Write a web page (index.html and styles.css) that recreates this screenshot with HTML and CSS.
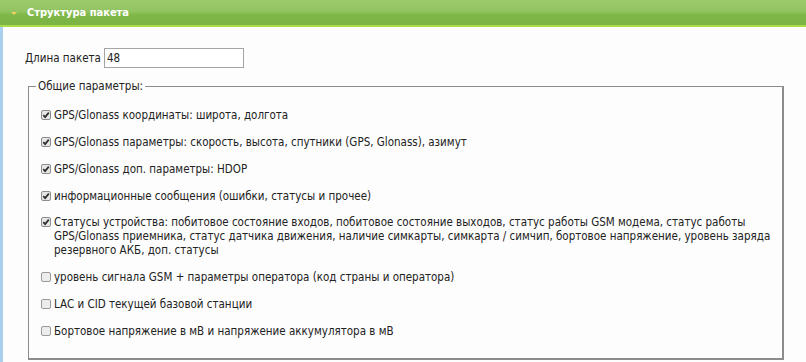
FILE: index.html
```html
<!DOCTYPE html>
<html lang="ru">
<head>
<meta charset="utf-8">
<title>Структура пакета</title>
<link rel="stylesheet" href="styles.css">
</head>
<body>
<div class="panel">
  <div class="panel-header">
    <span class="caret"></span>
    <span class="panel-title">Структура пакета</span>
  </div>
  <div class="panel-body">
    <div class="length-row">
      <label class="length-label" for="len">Длина пакета</label>
      <input class="length-input" id="len" type="text" value="48">
    </div>
    <fieldset class="group">
      <legend class="group-legend">Общие параметры:</legend>
      <p class="opt"><span class="cb"><svg viewBox="0 0 10 10" width="10" height="10"><rect x="0.5" y="0.5" width="9" height="9" rx="1.5" fill="#e6e6e6" stroke="#8e8e8e"/><path d="M2.3 5.2 L4.1 7.1 L7.8 2.6" fill="none" stroke="#2e2e2e" stroke-width="1.7"/></svg></span>GPS/Glonass координаты: широта, долгота</p>
      <p class="opt"><span class="cb"><svg viewBox="0 0 10 10" width="10" height="10"><rect x="0.5" y="0.5" width="9" height="9" rx="1.5" fill="#e6e6e6" stroke="#8e8e8e"/><path d="M2.3 5.2 L4.1 7.1 L7.8 2.6" fill="none" stroke="#2e2e2e" stroke-width="1.7"/></svg></span>GPS/Glonass параметры: скорость, высота, спутники (GPS, Glonass), азимут</p>
      <p class="opt"><span class="cb"><svg viewBox="0 0 10 10" width="10" height="10"><rect x="0.5" y="0.5" width="9" height="9" rx="1.5" fill="#e6e6e6" stroke="#8e8e8e"/><path d="M2.3 5.2 L4.1 7.1 L7.8 2.6" fill="none" stroke="#2e2e2e" stroke-width="1.7"/></svg></span>GPS/Glonass доп. параметры: HDOP</p>
      <p class="opt"><span class="cb"><svg viewBox="0 0 10 10" width="10" height="10"><rect x="0.5" y="0.5" width="9" height="9" rx="1.5" fill="#e6e6e6" stroke="#8e8e8e"/><path d="M2.3 5.2 L4.1 7.1 L7.8 2.6" fill="none" stroke="#2e2e2e" stroke-width="1.7"/></svg></span>информационные сообщения (ошибки, статусы и прочее)</p>
      <p class="opt"><span class="cb"><svg viewBox="0 0 10 10" width="10" height="10"><rect x="0.5" y="0.5" width="9" height="9" rx="1.5" fill="#e6e6e6" stroke="#8e8e8e"/><path d="M2.3 5.2 L4.1 7.1 L7.8 2.6" fill="none" stroke="#2e2e2e" stroke-width="1.7"/></svg></span>Статусы устройства: побитовое состояние входов, побитовое состояние выходов, статус работы GSM модема, статус работы GPS/Glonass приемника, статус датчика движения, наличие симкарты, симкарта / симчип, бортовое напряжение, уровень заряда резервного АКБ, доп. статусы</p>
      <p class="opt"><span class="cb"><svg viewBox="0 0 10 10" width="10" height="10"><rect x="0.5" y="0.5" width="9" height="9" rx="1.5" fill="#ececec" stroke="#9a9a9a"/></svg></span>уровень сигнала GSM + параметры оператора (код страны и оператора)</p>
      <p class="opt"><span class="cb"><svg viewBox="0 0 10 10" width="10" height="10"><rect x="0.5" y="0.5" width="9" height="9" rx="1.5" fill="#ececec" stroke="#9a9a9a"/></svg></span>LAC и CID текущей базовой станции</p>
      <p class="opt last"><span class="cb"><svg viewBox="0 0 10 10" width="10" height="10"><rect x="0.5" y="0.5" width="9" height="9" rx="1.5" fill="#ececec" stroke="#9a9a9a"/></svg></span>Бортовое напряжение в мВ и напряжение аккумулятора в мВ</p>
    </fieldset>
    <p class="after">Дополнительные параметры устройства</p>
  </div>
</div>
</body>
</html>
```
FILE: styles.css
```css
html, body {
  margin: 0;
  padding: 0;
  background: #fdfdfd;
}
body {
  font-family: "DejaVu Sans Condensed", "DejaVu Sans", sans-serif;
  font-stretch: condensed;
  font-size: 11.5px;
  color: #222;
  overflow: hidden;
}
.panel {
  width: 806px;
}
.panel-header {
  height: 25px;
  display: flex;
  align-items: center;
  background: linear-gradient(to bottom, #9ccb6c 0%, #92c462 45%, #80b849 58%, #7ab443 100%);
  border-bottom: 2px solid #acdc4e;
  padding-left: 11px;
  gap: 10px;
}
.caret {
  width: 0;
  height: 0;
  border-left: 3px solid transparent;
  border-right: 3px solid transparent;
  border-top: 3px solid #f2cf5b;
  margin-top: 1px;
}
.panel-title {
  color: #fff;
  font-weight: bold;
  font-size: 11px;
}
.panel-body {
  border-left: 3px solid #a9d0ee;
  padding: 21px 22px 0 22px;
}
.length-row {
  display: flex;
  align-items: center;
  height: 20px;
  gap: 3px;
}
.length-label {
  line-height: 14px;
}
.length-input {
  box-sizing: border-box;
  width: 140px;
  height: 20px;
  margin: 0;
  border: 1px solid #a5a5a5;
  background: #fff;
  font: inherit;
  color: #222;
  padding: 0 2px;
}
.group {
  margin: 11px 0 0 3px;
  padding: 15px 4px 20px 12px;
  border-style: solid;
  border-color: #8c8c8c;
  border-width: 1px 2px 2px 1px;
}
.group-legend {
  padding: 0 2px;
  margin-left: -5px;
  line-height: 14px;
}
.opt {
  margin: 0 0 12.85px 0;
  line-height: 14px;
  padding-left: 13px;
  position: relative;
}
.opt.last {
  margin-bottom: 0;
}
.cb {
  position: absolute;
  left: 0;
  top: 2px;
  width: 10px;
  height: 10px;
}
.cb svg {
  display: block;
}
.after {
  margin: 2px 0 0 11px;
  line-height: 14px;
}
```
